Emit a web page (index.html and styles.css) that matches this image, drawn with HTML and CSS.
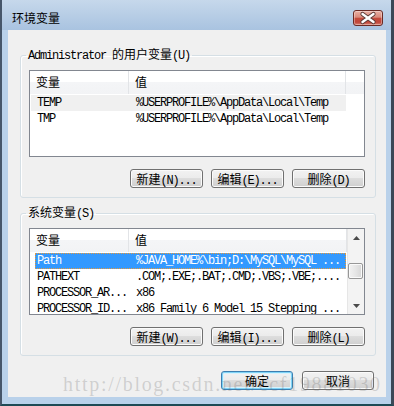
FILE: index.html
```html
<!DOCTYPE html>
<html lang="zh-CN">
<head>
    <meta charset="UTF-8">
    <title>环境变量</title>
    <link rel="stylesheet" href="styles.css">
</head>
<body>
    <div class="window">
        <div class="titlebar">
            <span class="title">环境变量</span>
            <div class="close">
                <svg width="30" height="16" viewBox="0 0 30 16">
                    <path d="M9.5 4 L20.5 12 M9.5 12 L20.5 4" stroke="#5a3a36" stroke-width="4.2" stroke-linecap="round"/>
                    <path d="M9.5 4 L20.5 12 M9.5 12 L20.5 4" stroke="#ffffff" stroke-width="2.4" stroke-linecap="round"/>
                </svg>
            </div>
        </div>

        <div class="client">
            <fieldset class="group">
                <legend><span class="lat">Administrator </span>的用户变量<span class="lat">(U)</span></legend>
                <div class="list">
                    <div class="list-main">
                        <div class="list-head">
                            <div class="hc1">变量</div>
                            <div class="hc2">值</div>
                            <div class="hfill"></div>
                        </div>
                        <div class="rows">
                            <div class="row hot"><div class="c1">TEMP</div><div class="c2">%USERPROFILE%\AppData\Local\Temp</div></div>
                            <div class="row"><div class="c1">TMP</div><div class="c2">%USERPROFILE%\AppData\Local\Temp</div></div>
                        </div>
                    </div>
                </div>
                <div class="btns">
                    <button class="btn">新建<span class="lat">(N)...</span></button>
                    <button class="btn">编辑<span class="lat">(E)...</span></button>
                    <button class="btn">删除<span class="lat">(D)</span></button>
                </div>
            </fieldset>

            <fieldset class="group second">
                <legend>系统变量<span class="lat">(S)</span></legend>
                <div class="list">
                    <div class="list-main">
                        <div class="list-head">
                            <div class="hc1">变量</div>
                            <div class="hc2 last">值</div>
                        </div>
                        <div class="rows">
                            <div class="row sel"><div class="c1">Path</div><div class="c2">%JAVA_HOME%\bin;D:\MySQL\MySQL ...</div></div>
                            <div class="row"><div class="c1">PATHEXT</div><div class="c2">.COM;.EXE;.BAT;.CMD;.VBS;.VBE;....</div></div>
                            <div class="row"><div class="c1">PROCESSOR_AR...</div><div class="c2">x86</div></div>
                            <div class="row"><div class="c1">PROCESSOR_ID...</div><div class="c2">x86 Family 6 Model 15 Stepping ...</div></div>
                        </div>
                    </div>
                    <div class="vscroll">
                        <div class="arrow"><svg width="7" height="4" viewBox="0 0 7 4"><polygon points="3.5,0 7,4 0,4" fill="#4a4a4a"/></svg></div>
                        <div class="thumb"></div>
                        <div class="track"></div>
                        <div class="arrow"><svg width="7" height="4" viewBox="0 0 7 4"><polygon points="0,0 7,0 3.5,4" fill="#4a4a4a"/></svg></div>
                    </div>
                </div>
                <div class="btns">
                    <button class="btn">新建<span class="lat">(W)...</span></button>
                    <button class="btn">编辑<span class="lat">(I)...</span></button>
                    <button class="btn">删除<span class="lat">(L)</span></button>
                </div>
            </fieldset>

            <div class="dlg-btns">
                <button class="btn default">确定</button>
                <button class="btn">取消</button>
            </div>
        </div>

        <div class="watermark">http://blog.csdn.net/ccf19881030</div>
    </div>
</body>
</html>
```

FILE: styles.css
```css
* {
    box-sizing: border-box;
}
body {
    margin: 0;
    font-family: "Noto Sans CJK SC", sans-serif;
    font-size: 12px;
    color: #000;
}
.lat {
    font-family: "Liberation Mono", monospace;
    letter-spacing: -1.2px;
}
.window {
    position: relative;
    width: 394px;
    height: 406px;
    background: linear-gradient(#c6d8eb, #a9c3e0 30px, #b9d1ea 30px);
    border-left: 2px solid #46566a;
    border-right: 3px solid #3b4857;
    border-bottom: 2px solid #1e4a55;
    padding: 0 5px 7px 6px;
    display: flex;
    flex-direction: column;
}
.titlebar {
    height: 30px;
    flex: none;
    display: flex;
    justify-content: space-between;
    align-items: flex-start;
    padding-top: 10px;
}
.title {
    padding-left: 4px;
    line-height: 16px;
}
.close {
    width: 30px;
    height: 16px;
    margin-right: 3px;
    border: 1px solid #6a2a24;
    border-radius: 3px;
    background: linear-gradient(#eab0a4, #d98a7c 45%, #c44b3c 50%, #c0463a 80%, #d8806f);
    box-shadow: inset 0 0 0 1px rgba(255, 255, 255, 0.35);
    overflow: hidden;
}
.close svg {
    display: block;
    margin: -1px 0 0 -1px;
}
.client {
    flex: 1;
    background: #f0f0f0;
    padding: 17px 10px 0 12px;
}
.group {
    margin: 0;
    border: 1px solid #d5dfe5;
    border-radius: 3px;
    box-shadow: inset 1px 1px 0 #fff;
    padding: 7px 10px 9px 8px;
}
.group.second {
    margin-top: 7px;
}
.group legend {
    padding: 0 2px;
    margin-left: -3px;
    line-height: 14px;
}
.list {
    height: 87px;
    border: 1px solid #828790;
    background: #fff;
    display: flex;
    overflow: hidden;
}
.list-main {
    flex: 1;
    min-width: 0;
}
.list-head {
    height: 23px;
    display: flex;
    background: linear-gradient(#fff 0, #fff 11px, #f4f5f7 11px, #f2f3f5);
    line-height: 22px;
}
.hc1 {
    width: 99px;
    padding-left: 6px;
    border-right: 1px solid #e2e4e7;
}
.hc2 {
    width: 217px;
    padding-left: 6px;
    border-right: 1px solid #e2e4e7;
}
.hc2.last {
    flex: 1;
}
.hfill {
    flex: 1;
}
.rows {
    padding-top: 1px;
    font-family: "Liberation Mono", monospace;
    letter-spacing: -1.2px;
}
.row {
    display: flex;
    height: 16px;
    line-height: 16px;
    margin-left: 1px;
    width: 315px;
    white-space: nowrap;
}
.row .c1 {
    width: 98px;
    padding-left: 6px;
    flex: none;
    overflow: hidden;
}
.row .c2 {
    flex: 1;
    padding-left: 7px;
    overflow: hidden;
}
.row.hot {
    background: #f0f0f0;
}
.row.sel {
    margin-left: 5px;
    width: 311px;
    background: #3399ff;
    color: #fff;
    border: 1px dotted #e89a3c;
    line-height: 14px;
}
.row.sel .c1 {
    width: 93px;
    padding-left: 1px;
}
.vscroll {
    width: 17px;
    flex: none;
    display: flex;
    flex-direction: column;
    background: #f3f3f3;
    border-left: 1px solid #e6e6e6;
}
.arrow {
    height: 17px;
    display: flex;
    align-items: center;
    justify-content: center;
}
.thumb {
    height: 16px;
    margin: 17px 1px 0 0;
    border: 1px solid #979797;
    border-radius: 2px;
    background: linear-gradient(to right, #f2f2f2, #e6e6e6 50%, #d6d6d6);
    box-shadow: inset 0 0 0 1px #fafafa;
}
.track {
    flex: 1;
}
.btns {
    display: flex;
    justify-content: flex-end;
    gap: 8px;
    margin-top: 12px;
}
.btn {
    width: 73px;
    height: 19px;
    padding: 0;
    font-family: "Noto Sans CJK SC", sans-serif;
    font-size: 12px;
    line-height: 17px;
    color: #000;
    border: 1px solid #707070;
    border-radius: 3px;
    background: linear-gradient(#f2f2f2, #ebebeb 50%, #dddddd 50%, #cfcfcf);
    box-shadow: inset 0 0 0 1px #fbfbfb;
}
.dlg-btns {
    display: flex;
    justify-content: flex-end;
    gap: 9px;
    margin-top: 15px;
    padding-right: 2px;
}
.dlg-btns .btn {
    width: 72px;
}
.btn.default {
    border-color: #3c7fb1;
    box-shadow: inset 0 0 0 1px #7fd3f6, inset 0 0 0 2px #d9f2fc;
}
.watermark {
    position: absolute;
    left: 61px;
    top: 373px;
    font-family: "Liberation Serif", serif;
    font-size: 20px;
    line-height: 23px;
    letter-spacing: 1.7px;
    color: rgba(110, 110, 110, 0.26);
    pointer-events: none;
    white-space: nowrap;
}
```
